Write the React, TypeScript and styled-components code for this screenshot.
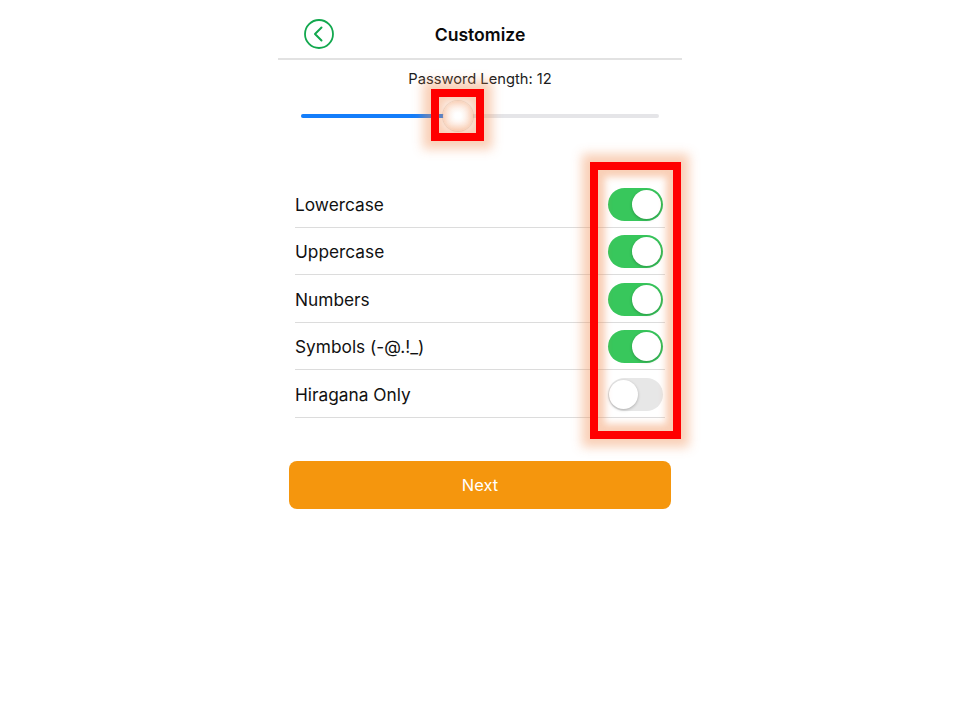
import React from "react";
import styled, { createGlobalStyle } from "styled-components";

const GlobalStyle = createGlobalStyle`
  html, body {
    margin: 0;
    padding: 0;
    background: #fff;
    font-family: "Inter", "Liberation Sans", sans-serif;
    color: #0a0a0a;
  }
`;

const Screen = styled.div`
  width: 404px;
  margin: 0 auto;
`;

const NavBar = styled.header`
  height: 60px;
  box-sizing: border-box;
  display: grid;
  grid-template-columns: 1fr auto 1fr;
  align-items: center;
  padding: 10px 0 0 26px;
  border-bottom: 2px solid #e2e2e2;
`;

const BackButton = styled.button`
  width: 30px;
  height: 30px;
  padding: 0;
  border: 0;
  background: none;
  display: block;
`;

const Title = styled.h1`
  margin: 2px 26px 0 0;
  font-size: 17.6px;
  font-weight: 600;
  line-height: 22px;
`;

const SliderSection = styled.section`
  padding-top: 10px;
  height: 112px;
  box-sizing: border-box;
  text-align: center;
`;

const SliderLabel = styled.div`
  font-size: 14.7px;
  font-weight: 400;
  line-height: 18px;
  color: #1c1c1c;
`;

const SliderTrack = styled.div`
  position: relative;
  height: 4px;
  margin: 26px 23px 0;
  border-radius: 2px;
  background: #e5e5e8;
`;

const SliderFill = styled.div`
  height: 100%;
  border-radius: 2px 0 0 2px;
  background: #147efb;
`;

const SliderThumb = styled.div`
  position: absolute;
  left: 142px;
  top: -13px;
  width: 30px;
  height: 30px;
  border-radius: 50%;
  background: radial-gradient(circle, #fff 0%, #fff 15%, #fbdcc9 100%);
  box-shadow: 0 0 1px 1px rgba(190, 150, 120, 0.3);
`;

const Highlight = styled.div`
  position: absolute;
  box-sizing: border-box;
  border: 8px solid #ff0000;
  box-shadow:
    0 0 10px 8px rgba(240, 140, 80, 0.42),
    inset 0 0 7px 7px rgba(240, 140, 80, 0.42);
`;

const ThumbHighlight = styled(Highlight)`
  left: 130px;
  top: -25px;
  width: 53px;
  height: 52px;
  box-shadow:
    0 0 10px 8px rgba(240, 140, 80, 0.42),
    inset 0 0 8px 5px rgba(240, 140, 80, 0.42);
`;

const OptionList = styled.ul`
  position: relative;
  list-style: none;
  margin: 0 17px;
  padding: 8px 0 0;
`;

const OptionRow = styled.li`
  height: 47.5px;
  box-sizing: border-box;
  padding-top: 2px;
  display: flex;
  align-items: center;
  justify-content: space-between;
  border-bottom: 1px solid #dcdcdc;
  font-size: 17.3px;
  color: #111;
`;

const Toggle = styled.span<{ $on: boolean }>`
  display: flex;
  justify-content: ${(props) => (props.$on ? "flex-end" : "flex-start")};
  align-items: center;
  box-sizing: border-box;
  width: 55px;
  height: 33px;
  margin-right: 2px;
  padding: 0 ${(props) => (props.$on ? "2px" : "1px")};
  border-radius: 17px;
  background: ${(props) => (props.$on ? "#38c75c" : "#e7e7e7")};
`;

const Knob = styled.span`
  width: 29px;
  height: 29px;
  border-radius: 50%;
  background: #fff;
  box-shadow: 0 1px 3px rgba(0, 0, 0, 0.25);
`;

const ToggleHighlight = styled(Highlight)`
  left: 295px;
  top: -10px;
  width: 91px;
  height: 277px;
`;

const NextButton = styled.button`
  display: block;
  width: 382px;
  height: 48px;
  margin: 43px auto 0;
  border: 0;
  border-radius: 8px;
  background: #f5960d;
  color: #fff;
  font-family: inherit;
  font-size: 16.5px;
  font-weight: 400;
`;

const options = [
  { label: "Lowercase", on: true },
  { label: "Uppercase", on: true },
  { label: "Numbers", on: true },
  { label: "Symbols (-@.!_)", on: true },
  { label: "Hiragana Only", on: false },
];

export default function App() {
  return (
    <Screen>
      <GlobalStyle />
      <NavBar>
        <BackButton aria-label="Back">
          <svg width="30" height="30" viewBox="0 0 30 30" fill="none">
            <circle cx="15" cy="15" r="14" stroke="#12a84e" strokeWidth="1.8" />
            <path d="M17.5 8.5 L11 15 L17.5 21.5" stroke="#12a84e" strokeWidth="2" strokeLinecap="round" strokeLinejoin="round" />
          </svg>
        </BackButton>
        <Title>Customize</Title>
      </NavBar>
      <SliderSection>
        <SliderLabel>Password Length: 12</SliderLabel>
        <SliderTrack>
          <SliderFill style={{ width: `${(144 / 358) * 100}%` }} />
          <SliderThumb />
          <ThumbHighlight />
        </SliderTrack>
      </SliderSection>
      <OptionList>
        {options.map((option) => (
          <OptionRow key={option.label}>
            {option.label}
            <Toggle $on={option.on}>
              <Knob />
            </Toggle>
          </OptionRow>
        ))}
        <ToggleHighlight />
      </OptionList>
      <NextButton>Next</NextButton>
    </Screen>
  );
}
